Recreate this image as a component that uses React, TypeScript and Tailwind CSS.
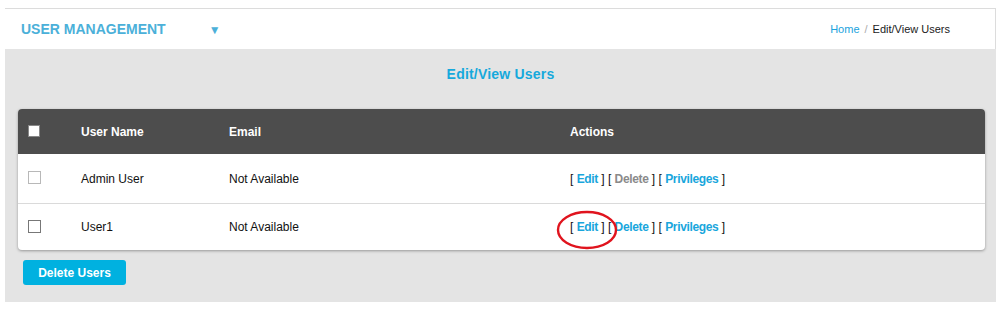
const users = [
  { name: "Admin User", email: "Not Available", canDelete: false, box: "border-[#b8b8b8]" },
  { name: "User1", email: "Not Available", canDelete: true, box: "border-[#777]" },
];

export default function App() {
  return (
    <div className="w-[1005px] h-[310px] bg-white font-['Liberation_Sans',Arial,sans-serif] pt-[8px] pl-[5px]">
      <div className="w-[991px] border-t border-[#dcdcdc]">
        {/* header bar */}
        <div className="h-[40px] bg-white border-r border-[#dcdcdc] flex items-center pl-[16px] pr-[45px]">
          <div className="text-[14px] font-bold text-[#4bb0d9]">USER MANAGEMENT</div>
          <div className="ml-[43px] text-[12px] text-[#4bb0d9] mt-[1px]">▼</div>
          <div className="ml-auto text-[11px] flex items-center gap-[5px]">
            <span className="text-[#1ba3dd]">Home</span>
            <span className="text-[#aaa]">/</span>
            <span className="text-[#1a1a1a]">Edit/View Users</span>
          </div>
        </div>

        {/* content */}
        <div className="h-[253px] bg-[#e4e4e4] pt-[16px] pl-[13px] pr-[10px]">
          <div className="text-center text-[14px] leading-[18px] font-bold tracking-[0.2px] text-[#16a9dc] pr-[3px]">
            Edit/View Users
          </div>

          <div className="relative mt-[26px] w-[967px] bg-white rounded-[4px] shadow-[0_1px_3px_rgba(0,0,0,0.35)] text-[12px]">
            <div className="h-[45px] bg-[#4d4d4d] rounded-t-[4px] flex items-center text-white font-bold">
              <div className="w-[63px] pl-[10px]">
                <div className="w-[12px] h-[12px] bg-white border border-[#888] -mt-[2px]" />
              </div>
              <div className="w-[148px]">User Name</div>
              <div className="w-[341px]">Email</div>
              <div>Actions</div>
            </div>
            {users.map((u, i) => (
              <div
                key={u.name}
                className={
                  "flex items-center text-[#111] " +
                  (i === 0 ? "h-[50px] border-b border-[#dadada]" : "h-[46px]")
                }
              >
                <div className="w-[63px] pl-[10px]">
                  <div className={"w-[13px] h-[13px] bg-white border " + u.box + " -mt-[2px]"} />
                </div>
                <div className="w-[148px]">{u.name}</div>
                <div className="w-[341px]">{u.email}</div>
                <div className="whitespace-pre">
                  <span>[ </span>
                  <span className="text-[#19a6dc] font-bold tracking-[-0.35px]">Edit</span>
                  <span> ] [ </span>
                  <span
                    className={
                      u.canDelete
                        ? "text-[#19a6dc] font-bold tracking-[-0.35px]"
                        : "text-[#8a8a8a] font-bold tracking-[-0.35px]"
                    }
                  >
                    Delete
                  </span>
                  <span> ] [ </span>
                  <span className="text-[#19a6dc] font-bold tracking-[-0.35px]">Privileges</span>
                  <span> ]</span>
                </div>
              </div>
            ))}
            {/* red annotation circle */}
            <svg
              className="absolute left-[538px] top-[101px] pointer-events-none"
              width="62"
              height="40"
              viewBox="0 0 62 40"
            >
              <ellipse cx="31" cy="20" rx="29" ry="18" fill="none" stroke="#e0141e" strokeWidth="2.4" />
            </svg>
          </div>

          <button className="mt-[10px] ml-[5px] w-[103px] h-[25px] rounded-[3px] bg-[#00b1e0] text-white text-[12px] font-bold">
            Delete Users
          </button>
        </div>
      </div>
    </div>
  );
}
